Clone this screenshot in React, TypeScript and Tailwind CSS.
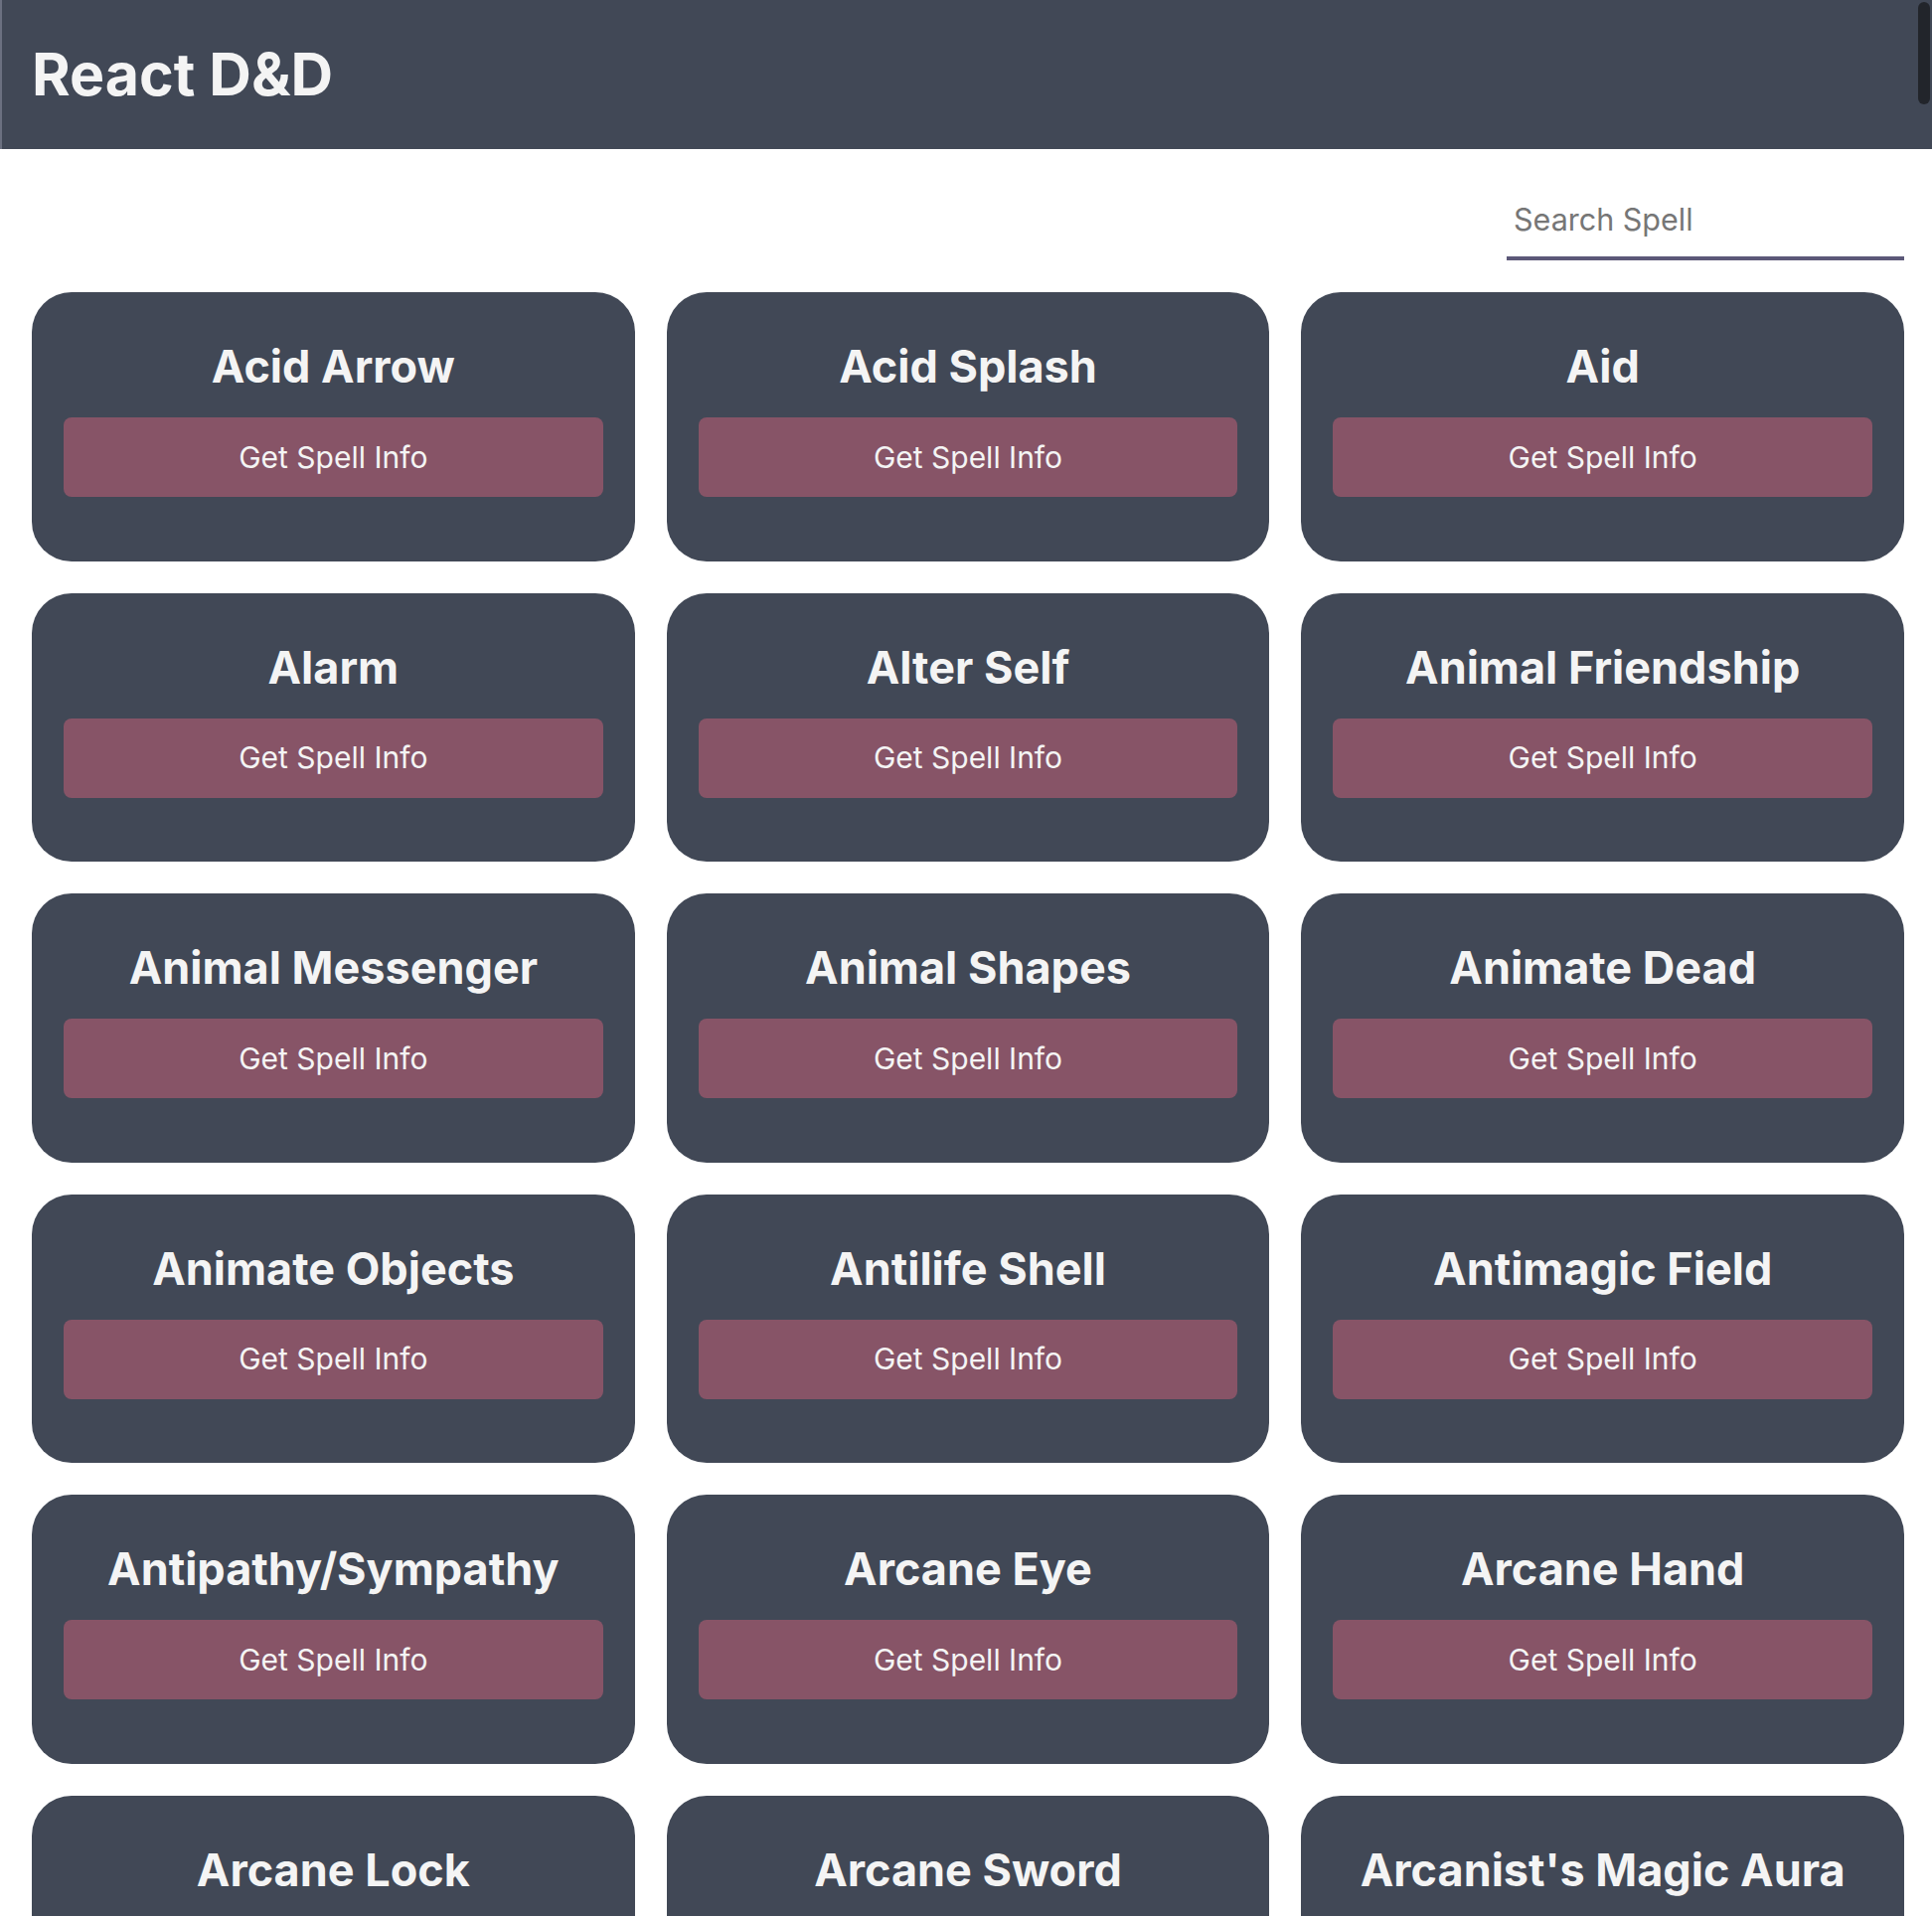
const spells = [
  'Acid Arrow',
  'Acid Splash',
  'Aid',
  'Alarm',
  'Alter Self',
  'Animal Friendship',
  'Animal Messenger',
  'Animal Shapes',
  'Animate Dead',
  'Animate Objects',
  'Antilife Shell',
  'Antimagic Field',
  'Antipathy/Sympathy',
  'Arcane Eye',
  'Arcane Hand',
  'Arcane Lock',
  'Arcane Sword',
  "Arcanist's Magic Aura",
  'Astral Projection',
  'Augury',
  'Aura of Life',
]

function SpellCard({ name }: { name: string }) {
  return (
    <div className="h-[270.5px] rounded-[40px] bg-[#414856] px-8 pt-[48px]">
      <h2 className="text-center text-[45px] leading-[54px] font-bold text-[#f4f4f4]">{name}</h2>
      <button className="mt-[24px] h-[80px] w-full rounded-lg bg-[#875467] text-[30px] text-[#f4f4f4]">
        Get Spell Info
      </button>
    </div>
  )
}

export default function App() {
  return (
    <div className="relative min-h-screen bg-white font-['Inter','Noto_Sans',sans-serif]">
      <header className="flex h-[150px] items-center border-l-2 border-[#6b7080] bg-[#414856] pl-[30px]">
        <h1 className="text-[59px] leading-[72px] font-bold text-[#f4f4f4]">React D&amp;D</h1>
      </header>

      <main className="pl-8 pr-7 pt-[52px] pb-8">
        <div className="mb-8 flex justify-end">
          <input
            type="text"
            placeholder="Search Spell"
            className="w-[400px] border-b-4 border-[#5c5878] pb-[18px] pl-[7px] text-[30.5px] leading-[38px] text-gray-800 outline-none placeholder:text-[#767676]"
          />
        </div>

        <div className="grid grid-cols-3 gap-8">
          {spells.map((s) => (
            <SpellCard key={s} name={s} />
          ))}
        </div>
      </main>

      {/* overlay scrollbar thumb */}
      <div className="absolute top-[2px] right-[2px] h-[103px] w-[12px] rounded-full bg-[#22252b]" />
    </div>
  )
}
